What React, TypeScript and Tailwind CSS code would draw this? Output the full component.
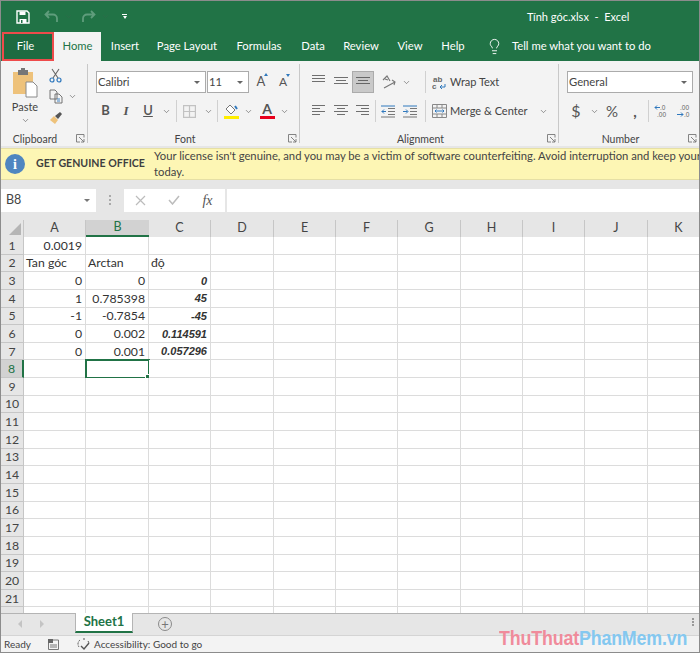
import { ChevronDown, Lightbulb } from 'lucide-react'

const tabs = [
  { label: 'Insert', w: 'w-[48px]' },
  { label: 'Page Layout', w: 'w-[76px]' },
  { label: 'Formulas', w: 'w-[68px]' },
  { label: 'Data', w: 'w-[40px]' },
  { label: 'Review', w: 'w-[56px]' },
  { label: 'View', w: 'w-[42px]' },
  { label: 'Help', w: 'w-[44px]' },
]

const columns = [
  { name: 'A', w: 'w-[62px]' },
  { name: 'B', w: 'w-[63px]' },
  { name: 'C', w: 'w-[62px]' },
  { name: 'D', w: 'w-[63px]' },
  { name: 'E', w: 'w-[62px]' },
  { name: 'F', w: 'w-[62px]' },
  { name: 'G', w: 'w-[63px]' },
  { name: 'H', w: 'w-[62px]' },
  { name: 'I', w: 'w-[62px]' },
  { name: 'J', w: 'w-[63px]' },
  { name: 'K', w: 'w-[62px]' },
]

// cells by row, index 0 = column A
const cells: Record<number, { text: string; left?: boolean }[]> = {
  1: [{ text: '0.0019' }],
  2: [
    { text: 'Tan góc', left: true },
    { text: 'Arctan', left: true },
    { text: 'độ', left: true },
  ],
  3: [{ text: '0' }, { text: '0' }, { text: '0' }],
  4: [{ text: '1' }, { text: '0.785398' }, { text: '45' }],
  5: [{ text: '-1' }, { text: '-0.7854' }, { text: '-45' }],
  6: [{ text: '0' }, { text: '0.002' }, { text: '0.114591' }],
  7: [{ text: '0' }, { text: '0.001' }, { text: '0.057296' }],
}

const rows = Array.from({ length: 22 }, (_, i) => i + 1)

function Chev({ className = 'w-[12px]' }: { className?: string }) {
  return (
    <span className={`flex justify-center ${className}`}>
      <ChevronDown size={9} strokeWidth={1.6} className="text-[#555]" />
    </span>
  )
}

function Lines({ rows, hi }: { rows: [number, number][]; hi?: string }) {
  return (
    <svg width="16" height="14" viewBox="0 0 16 14" fill="none" stroke={hi ?? '#6f6f6f'}>
      {rows.map(([a, b], i) => (
        <path key={i} d={`M${a} ${1.5 + i * 3}H${b}`} />
      ))}
    </svg>
  )
}

function Launcher() {
  return (
    <svg width="9" height="9" viewBox="0 0 9 9" fill="none" stroke="#777" strokeWidth="0.9">
      <path d="M8 3.5V.5H.5V8H4M3 3l5 5M8 5v3H5" />
    </svg>
  )
}

function GroupLabel({ children }: { children: string }) {
  return (
    <div className="flex h-[16px] shrink-0 items-center">
      <span className="flex-1 pr-[7px] pt-[2px] text-center text-[10.5px] leading-none text-[#444]">{children}</span>
      <span className="mr-[2px] flex">
        <Launcher />
      </span>
    </div>
  )
}

function Divider({ h = 'h-[22px]' }: { h?: string }) {
  return <span className={`w-px bg-[#d0d0d0] ${h}`} />
}

function Slot({ w, children }: { w: string; children: React.ReactNode }) {
  return <span className={`flex items-center justify-center ${w}`}>{children}</span>
}

function Select({ w, label, pad = 'pr-[5px]' }: { w: string; label: string; pad?: string }) {
  return (
    <div className={`flex h-[22px] items-center justify-between border border-[#ababab] bg-white pl-[1px] text-[11.25px] text-[#444] ${pad} ${w}`}>
      <span className="pt-[1px]">{label}</span>
      <span className="h-0 w-0 border-x-[3px] border-t-[3px] border-x-transparent border-t-[#666]" />
    </div>
  )
}

function TitleBar() {
  return (
    <div className="flex h-[31px] items-center bg-[#217346] text-white">
      <span className="ml-[15px] flex w-[14px]">
        <svg width="14" height="14" viewBox="0 0 14 14" fill="none">
          <path d="M1 1h10l2 2v10H1z" stroke="#fff" strokeWidth="1.4" />
          <path d="M3.5 1.5h6v3.5h-6z" fill="#fff" />
          <path d="M3.5 9h7v4h-7z" fill="#fff" />
          <path d="M5 10h1.5v3H5z" fill="#217346" />
        </svg>
      </span>
      <span className="ml-[14px] flex w-[15px]">
        <svg width="15" height="13" viewBox="0 0 15 13" fill="none" stroke="#5f9d7c" strokeWidth="1.8">
          <path d="M5 1 1.5 4.5 5 8M2 4.5h7a4 4 0 0 1 4 4V12" />
        </svg>
      </span>
      <Chev className="ml-[3px] w-[12px] opacity-30" />
      <span className="ml-[7px] flex w-[15px]">
        <svg width="15" height="13" viewBox="0 0 15 13" fill="none" stroke="#5f9d7c" strokeWidth="1.8">
          <path d="M10 1l3.5 3.5L10 8M13 4.5H6a4 4 0 0 0-4 4V12" />
        </svg>
      </span>
      <Chev className="ml-[3px] w-[12px] opacity-30" />
      <span className="ml-[11px] flex w-[5px] flex-col gap-[1px]">
        <span className="h-px w-[5px] bg-white" />
        <span className="ml-[0.5px] h-0 w-0 border-x-[2px] border-t-[3px] border-x-transparent border-t-white" />
      </span>
      <span className="ml-[400px] pt-[2px] text-[11px] whitespace-pre">Tính góc.xlsx  -  Excel</span>
    </div>
  )
}

function TabRow() {
  return (
    <div className="flex h-[29px] bg-[#217346] text-[11.25px] text-white">
      <div className="ml-[1px] flex h-[29px] w-[52px] items-center justify-center border-2 border-[#ee4b4b] bg-[#1e6b41] pr-[5px]">
        File
      </div>
      <div className="flex w-[47px] items-center justify-center bg-[#f3f3f3] text-[#217346]">Home</div>
      {tabs.map((t) => (
        <div key={t.label} className={`flex items-center justify-center ${t.w}`}>
          {t.label}
        </div>
      ))}
      <Lightbulb size={17} strokeWidth={1.3} className="ml-[11px] mt-[6px]" />
      <span className="ml-[9px] flex items-center">Tell me what you want to do</span>
    </div>
  )
}

function ClipboardGroup() {
  return (
    <div className="flex w-[86px] shrink-0 flex-col">
      <div className="flex h-[66px] shrink-0">
        <div className="flex w-[48px] flex-col items-center pt-[4px]">
          <svg width="26" height="30" viewBox="0 0 26 30">
            <path d="M1 4h20v22H1z" fill="#eec27b" />
            <path d="M6 2h10v5H6z" fill="#777" />
            <path d="M9 0h4v3H9z" fill="#777" />
            <path d="M14 14h7l4 4v11H14z" fill="#fff" stroke="#8a8a8a" />
          </svg>
          <span className="mt-[1px] text-[11px] leading-[16px] text-[#444]">Paste</span>
          <ChevronDown size={9} strokeWidth={1.6} className="mt-[1px] text-[#555]" />
        </div>
        <div className="flex flex-col pt-[4px]">
          <svg width="13" height="15" viewBox="0 0 13 15" fill="none">
            <path d="M3 1l6 9M10 1L4 10" stroke="#666" strokeWidth="1.1" />
            <circle cx="3" cy="12" r="2" stroke="#2f78bd" strokeWidth="1.2" />
            <circle cx="10" cy="12" r="2" stroke="#2f78bd" strokeWidth="1.2" />
          </svg>
          <div className="mt-[6px] flex items-center">
            <svg width="14" height="15" viewBox="0 0 14 15" fill="none" stroke="#666" strokeWidth="0.9">
              <path d="M1 1h5l2 2v7H1zM6 5h4l3 3v6H6z" fill="#f3f3f3" />
              <path d="M8 10h3M8 12h3" stroke="#2f78bd" />
            </svg>
            <Chev className="ml-[3px] w-[12px]" />
          </div>
          <svg width="13" height="13" viewBox="0 0 13 13" className="mt-[8px]">
            <path d="M1 8l4-4 4 4-3 4z" fill="#eec27b" />
            <path d="M6 4l5-4 2 2-4 5z" fill="#555" />
          </svg>
        </div>
      </div>
      <GroupLabel>Clipboard</GroupLabel>
    </div>
  )
}

function FontGroup() {
  return (
    <div className="flex w-[210px] shrink-0 flex-col">
      <div className="flex h-[66px] shrink-0 flex-col pl-[7px] pt-[7px]">
        <div className="flex h-[22px] items-center">
          <Select w="w-[110px]" label="Calibri" />
          <span className="ml-[1px]" />
          <Select w="w-[42px]" label="11" />
          <Slot w="w-[22px] ml-[1px]">
            <span className="relative text-[13px] text-[#555]">
              A
              <span className="absolute top-[1px] -right-[3px] h-0 w-0 border-x-[2.5px] border-b-[3px] border-x-transparent border-b-[#2f78bd]" />
            </span>
          </Slot>
          <Slot w="w-[22px]">
            <span className="relative text-[12px] text-[#555]">
              A
              <span className="absolute top-[1px] -right-[3px] h-0 w-0 border-x-[2.5px] border-t-[3px] border-x-transparent border-t-[#2f78bd]" />
            </span>
          </Slot>
        </div>
        <div className="mt-[7px] flex h-[22px] items-center text-[13px] text-[#555]">
          <Slot w="w-[19px]">
            <b>B</b>
          </Slot>
          <Slot w="w-[22px]">
            <i className="font-['Liberation_Serif',serif] font-bold">I</i>
          </Slot>
          <Slot w="w-[22px]">
            <span className="font-semibold underline">U</span>
          </Slot>
          <Chev className="w-[14px]" />
          <span className="ml-[3px]" />
          <Divider />
          <Slot w="w-[25px]">
            <svg width="13" height="13" viewBox="0 0 13 13" fill="none" stroke="#c2c2c2" strokeWidth="1.2">
              <path d="M.6.6h11.8v11.8H.6zM6.5.6v11.8M.6 6.5h11.8" />
            </svg>
          </Slot>
          <Chev className="w-[12px]" />
          <span className="ml-[3px]" />
          <Divider />
          <span className="ml-[5px] flex w-[16px] flex-col items-center">
            <svg width="14" height="12" viewBox="0 0 14 12" fill="none" stroke="#777">
              <path d="M2 6l4-4 5 5-4 4z" fill="#fff" />
              <path d="M11 3l2 3" stroke="#2f78bd" strokeWidth="2" />
            </svg>
            <span className="mt-[1px] h-[3px] w-[15px] bg-[#ffee00]" />
          </span>
          <Chev className="ml-[3px] w-[12px]" />
          <span className="ml-[5px] flex w-[16px] flex-col items-center">
            <span className="text-[14px] leading-[12px] font-bold text-[#555]">A</span>
            <span className="mt-[1px] h-[3px] w-[15px] bg-[#e8001c]" />
          </span>
          <Chev className="ml-[3px] w-[12px]" />
        </div>
      </div>
      <GroupLabel>Font</GroupLabel>
    </div>
  )
}

function AlignmentGroup() {
  return (
    <div className="flex w-[257px] shrink-0 flex-col">
      <div className="flex h-[66px] shrink-0 flex-col pl-[9px] pt-[7px]">
        <div className="flex h-[22px] items-center text-[11px] whitespace-nowrap text-[#444]">
          <Slot w="w-[17px] -mt-[3px]">
            <Lines rows={[[1, 14], [1, 14], [1, 14]]} />
          </Slot>
          <Slot w="w-[22px] ml-[3px]">
            <span className="mt-[1px]">
              <Lines rows={[[1, 15], [3, 13], [1, 15]]} />
            </span>
          </Slot>
          <span className="flex h-[22px] w-[22px] items-center justify-center border border-[#ababab] bg-[#c9c9c9]">
            <span className="mt-[2px]">
              <Lines rows={[[1, 15], [3, 13], [1, 15]]} hi="#666" />
            </span>
          </span>
          <Slot w="w-[22px] ml-[4px]">
            <svg width="15" height="14" viewBox="0 0 15 14" fill="none" stroke="#777" strokeWidth="1.1">
              <path d="M1 5l4-4 3 5M3 4l3 1M2 13l11-6M10 5l3 2-1 3" />
            </svg>
          </Slot>
          <Chev className="w-[12px]" />
          <span className="ml-[13px]" />
          <Divider />
          <Slot w="w-[19px] ml-[4px]">
            <svg width="15" height="15" viewBox="0 0 15 15">
              <text x="1" y="7" fontSize="8" fontWeight="700" fill="#666" fontFamily="Liberation Sans">ab</text>
              <text x="0" y="14" fontSize="8" fontWeight="700" fill="#666" fontFamily="Liberation Sans">c</text>
              <path d="M13 9v3H8M10 10l-2 2 2 2" fill="none" stroke="#2f78bd" />
            </svg>
          </Slot>
          <span className="ml-[1px] pt-[1px]">Wrap Text</span>
        </div>
        <div className="mt-[7px] flex h-[22px] items-center text-[11px] whitespace-nowrap text-[#444]">
          <Slot w="w-[17px]">
            <Lines rows={[[1, 14], [1, 9], [1, 14], [1, 9]]} />
          </Slot>
          <Slot w="w-[22px] ml-[3px]">
            <Lines rows={[[1, 15], [4, 12], [1, 15], [4, 12]]} />
          </Slot>
          <Slot w="w-[20px]">
            <Lines rows={[[2, 15], [7, 15], [2, 15], [7, 15]]} />
          </Slot>
          <span className="ml-[3px]" />
          <Divider />
          <Slot w="w-[22px] ml-[1px]">
            <svg width="14" height="13" viewBox="0 0 14 13" fill="none" stroke="#777">
              <path d="M7 3.5h7M7 6.500h7M7 9.500h7M0 12h14" />
              <path d="M0 1h14" stroke="#2f78bd" />
              <path d="M5 6.500H.8M3 4.500l-2 2 2 2" stroke="#2f78bd" />
            </svg>
          </Slot>
          <Slot w="w-[22px]">
            <svg width="14" height="13" viewBox="0 0 14 13" fill="none" stroke="#777">
              <path d="M7 3.5h7M7 6.500h7M7 9.500h7M0 12h14" />
              <path d="M0 1h14" stroke="#2f78bd" />
              <path d="M0 6.500h4.500M3 4.500l2 2-2 2" stroke="#2f78bd" />
            </svg>
          </Slot>
          <span className="ml-[4px]" />
          <Divider />
          <Slot w="w-[21px] ml-[3px]">
            <svg width="15" height="14" viewBox="0 0 15 14" fill="none" stroke="#888">
              <path d="M.5.5h14v13H.5zM.5 4h14M.5 10h14M5 .5V4M10 .5V4M5 10v3.5M10 10v3.5" />
              <path d="M3 7h9M4.500 5.500 3 7l1.500 1.500M10.500 5.500 12 7l-1.500 1.500" stroke="#2f78bd" />
            </svg>
          </Slot>
          <span className="w-[87px] pt-[1px]">Merge &amp; Center</span>
          <Chev className="w-[12px]" />
        </div>
      </div>
      <GroupLabel>Alignment</GroupLabel>
    </div>
  )
}

function NumberGroup() {
  return (
    <div className="flex flex-1 flex-col">
      <div className="flex h-[66px] shrink-0 flex-col pl-[7px] pt-[7px]">
        <Select w="w-[126px]" label="General" />
        <div className="mt-[7px] flex h-[22px] items-center text-[#555]">
          <Slot w="w-[18px]">
            <span className="text-[16px]">$</span>
          </Slot>
          <Chev className="ml-[4px] w-[10px]" />
          <Slot w="w-[18px] ml-[4px]">
            <span className="text-[15px]">%</span>
          </Slot>
          <Slot w="w-[16px] ml-[6px]">
            <span className="text-[15px] font-bold">,</span>
          </Slot>
          <span className="ml-[5px]" />
          <Divider />
          <Slot w="w-[22px] ml-[1px]">
            <svg width="15" height="14" viewBox="0 0 15 14">
              <text x="6" y="6" fontSize="6.5" fill="#666" fontFamily="Liberation Sans">.0</text>
              <text x="3" y="13" fontSize="6.500" fill="#666" fontFamily="Liberation Sans">.00</text>
              <path d="M6 3.500H1M3 1.500l-2 2 2 2" fill="none" stroke="#2f78bd" />
            </svg>
          </Slot>
          <Slot w="w-[23px]">
            <svg width="15" height="14" viewBox="0 0 15 14">
              <text x="4" y="6" fontSize="6.5" fill="#666" fontFamily="Liberation Sans">.00</text>
              <text x="8" y="13" fontSize="6.500" fill="#666" fontFamily="Liberation Sans">.0</text>
              <path d="M1 10.500h6M5 8.500l2 2-2 2" fill="none" stroke="#2f78bd" />
            </svg>
          </Slot>
        </div>
      </div>
      <GroupLabel>Number</GroupLabel>
    </div>
  )
}

function RibbonSep() {
  return <span className="mr-px h-[79px] w-px shrink-0 bg-[#c8c8c8]" />
}

function Ribbon() {
  return (
    <div className="flex h-[85px] overflow-hidden bg-[#f3f3f3] pt-[3px]">
      <ClipboardGroup />
      <RibbonSep />
      <FontGroup />
      <RibbonSep />
      <AlignmentGroup />
      <RibbonSep />
      <NumberGroup />
    </div>
  )
}

function Notice() {
  return (
    <div className="mt-[2px] flex h-[32px] items-center overflow-hidden border-y border-[#e5dfa5] bg-[#fdf6b4] text-[#444]">
      <span className="ml-[4px] flex h-[20px] w-[20px] shrink-0 items-center justify-center rounded-full bg-[#4f86c0] font-['Liberation_Serif',serif] text-[14px] font-bold text-white">
        i
      </span>
      <span className="ml-[11px] w-[110px] shrink-0 text-[10.6px] font-bold whitespace-nowrap text-[#3f3f3f]">GET GENUINE OFFICE</span>
      <p className="ml-[8px] min-w-0 flex-1 text-[11.25px] leading-[16px]">
        <span className="block whitespace-nowrap">
          Your license isn't genuine, and you may be a victim of software counterfeiting. Avoid interruption and keep your
        </span>
        <span className="block">today.</span>
      </p>
    </div>
  )
}

function FormulaBar() {
  return (
    <div className="flex h-[39px] items-center bg-[#e6e6e6] pt-[1px]">
      <div className="flex h-[23px] w-[95px] items-center justify-between bg-white pl-[5px] pr-[6px] text-[12.5px] text-[#444]">
        B8
        <span className="h-0 w-0 border-x-[3px] border-t-[3px] border-x-transparent border-t-[#777]" />
      </div>
      <span className="mx-[13px] flex w-[2px] flex-col gap-[2px]">
        <span className="h-[2px] w-[2px] bg-[#aaa]" />
        <span className="h-[2px] w-[2px] bg-[#aaa]" />
        <span className="h-[2px] w-[2px] bg-[#aaa]" />
      </span>
      <div className="flex h-[23px] w-[101px] items-center bg-white">
        <Slot w="w-[33px]">
          <svg width="11" height="11" viewBox="0 0 11 11" fill="none" stroke="#bcbcbc" strokeWidth="1.2">
            <path d="M1 1l9 9M10 1l-9 9" />
          </svg>
        </Slot>
        <Slot w="w-[33px]">
          <svg width="12" height="10" viewBox="0 0 12 10" fill="none" stroke="#bcbcbc" strokeWidth="1.5">
            <path d="M1 5l3.500 4L11 1" />
          </svg>
        </Slot>
        <Slot w="w-[35px]">
          <span className="font-['Liberation_Serif',serif] text-[14px] text-[#555] italic">fx</span>
        </Slot>
      </div>
      <div className="ml-[2px] h-[23px] flex-1 bg-white" />
    </div>
  )
}

function HeaderRow() {
  return (
    <div className="flex h-[18px] shrink-0 bg-[#e6e6e6] pt-[1px] text-[12.5px] text-[#444]">
      <div className="flex w-[23px] shrink-0 items-end justify-end border-r border-[#c6c6c6] pb-[2px] pr-[2px]">
        <span className="h-0 w-0 border-b-[12px] border-l-[12px] border-b-[#b5b5b5] border-l-transparent" />
      </div>
      {columns.map((c) => (
        <div
          key={c.name}
          className={
            c.name === 'B'
              ? `flex shrink-0 items-center justify-center border-b-2 border-[#217346] bg-[#d2d2d2] text-[#217346] ${c.w}`
              : `flex shrink-0 items-center justify-center border-r border-[#c6c6c6] ${c.w}`
          }
        >
          {c.name}
        </div>
      ))}
    </div>
  )
}

function Row({ n }: { n: number }) {
  const selected = n === 8
  return (
    <div className="flex h-[17.65px] shrink-0">
      <div
        className={
          selected
            ? 'flex w-[23px] shrink-0 items-center justify-center border-r-2 border-b border-[#217346] border-b-[#c6c6c6] bg-[#d2d2d2] pt-[1px] text-[#217346]'
            : 'flex w-[23px] shrink-0 items-center justify-center border-r border-b border-[#c6c6c6] bg-[#e6e6e6] pt-[1px] text-[#444]'
        }
      >
        {n < 22 ? n : ''}
      </div>
      {columns.map((c, i) => {
        const cell = cells[n]?.[i]
        const italic = i === 2 && !cell?.left
        const active = selected && c.name === 'B'
        return (
          <div
            key={c.name}
            className={`relative flex shrink-0 items-center border-r border-b border-[#dcdcdc] bg-white pt-[1px] text-[#333] ${c.w} ${
              cell?.left ? 'justify-start pl-[2px]' : 'justify-end pr-[3px]'
            } ${italic ? "font-['Liberation_Sans',sans-serif] text-[11px] font-bold italic" : ''} ${
              active ? 'outline-2 -outline-offset-1 outline-[#217346]' : ''
            }`}
          >
            {cell?.text}
            {active && (
              <span className="absolute -right-[2px] -bottom-[2px] h-[5px] w-[5px] border border-white bg-[#217346]" />
            )}
          </div>
        )
      })}
    </div>
  )
}

function Sheet() {
  return (
    <div className="flex h-[394px] flex-col overflow-hidden bg-white text-[12.25px] leading-none">
      <HeaderRow />
      {rows.map((n) => (
        <Row key={n} n={n} />
      ))}
    </div>
  )
}

function SheetTabs() {
  return (
    <div className="flex h-[22px] items-start border-t border-[#b4b4b4] bg-[#e6e6e6]">
      <span className="ml-[17px] mt-[6px] h-0 w-0 border-y-[4px] border-r-[4px] border-y-transparent border-r-[#c4c4c4]" />
      <span className="ml-[18px] mt-[6px] h-0 w-0 border-y-[4px] border-l-[4px] border-y-transparent border-l-[#c4c4c4]" />
      <div className="ml-[31px] -mt-px flex h-[20px] w-[58px] items-center justify-center border-x border-b-2 border-[#b4b4b4] border-b-[#217346] bg-white text-[13px] font-bold text-[#217346]">
        Sheet1
      </div>
      <span className="ml-[25px] mt-[3px] flex h-[14px] w-[14px] items-center justify-center rounded-full border border-[#8a8a8a] text-[13px] leading-none text-[#777]">
        +
      </span>
      <span className="ml-auto mr-[5px] mt-[4px] flex flex-col gap-[1px]">
        <span className="h-[2px] w-[2px] bg-[#999]" />
        <span className="h-[2px] w-[2px] bg-[#999]" />
        <span className="h-[2px] w-[2px] bg-[#999]" />
      </span>
    </div>
  )
}

function StatusBar() {
  return (
    <div className="relative flex h-[17px] items-center border-t border-[#d4d4d4] bg-[#f3f3f3] text-[10px] text-[#444]">
      <span className="ml-[3px] w-[44px]">Ready</span>
      <span className="flex">
        <svg width="11" height="11" viewBox="0 0 11 11" fill="none" stroke="#777">
          <path d="M.5 1h10v9.500H.5z" />
          <path d="M0 0h5v4H0z" fill="#666" stroke="none" />
          <path d="M2 6h7M2 8h7" />
        </svg>
      </span>
      <span className="ml-[18px] flex">
        <svg width="14" height="13" viewBox="0 0 14 13" fill="none" stroke="#555">
          <path d="M3 2a5 5 0 0 0-1 7M6 1h2M11 3l1 2" strokeDasharray="2 1" />
          <path d="M4 8l3 3 5-6" strokeWidth="1.4" />
        </svg>
      </span>
      <span className="ml-[3px]">Accessibility: Good to go</span>
      {/* watermark sits over the tab and status bars */}
      <span className="absolute right-[12px] -top-[8px] origin-right scale-x-[0.87] font-['Liberation_Sans',sans-serif] text-[20.5px] leading-none font-bold tracking-[-0.2px]">
        <span className="text-[#f08b9b]">ThuThuat</span>
        <span className="text-[#84c8f0]">PhanMem.vn</span>
      </span>
    </div>
  )
}

export default function App() {
  return (
    <div className="h-[653px] w-[700px] overflow-hidden border border-[#8c8c8c] bg-[#e6e6e6] font-['Lato','Noto_Sans',sans-serif] text-[11.25px]">
      <TitleBar />
      <TabRow />
      <Ribbon />
      <Notice />
      <FormulaBar />
      <Sheet />
      <SheetTabs />
      <StatusBar />
    </div>
  )
}
